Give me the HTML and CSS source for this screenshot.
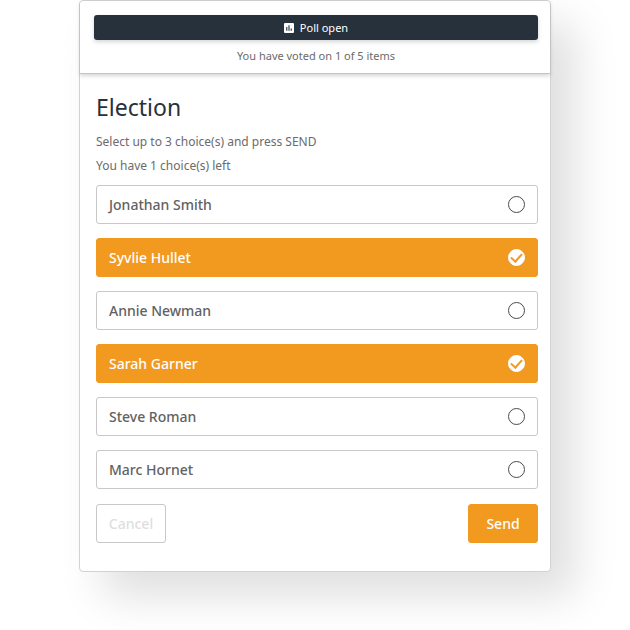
FILE: index.html
```html
<!DOCTYPE html>
<html lang="en">
<head>
  <meta charset="UTF-8">
  <meta name="viewport" content="width=device-width, initial-scale=1.0">
  <title>Election</title>
  <link rel="stylesheet" href="styles.css">
</head>
<body>
  <main class="card">
    <header class="header">
      <div class="status">
        <svg class="status-icon" viewBox="0 0 18 18" aria-hidden="true">
          <path fill="#fff" d="M2 0h14a2 2 0 0 1 2 2v14a2 2 0 0 1-2 2H2a2 2 0 0 1-2-2V2a2 2 0 0 1 2-2z"/>
          <path fill="#27313b" d="M4 7h2v7H4zM8 4h2v10H8zM12 10h2v4h-2z"/>
        </svg>
        <span>Poll open</span>
      </div>
      <p class="progress">You have voted on 1 of 5 items</p>
    </header>

    <form class="poll">
      <h1 class="title">Election</h1>
      <p class="hint">Select up to 3 choice(s) and press SEND</p>
      <p class="hint">You have 1 choice(s) left</p>

      <div class="choices">
        <label class="choice">
          <span>Jonathan Smith</span>
          <input class="check" type="checkbox" name="choice" value="smith">
        </label>
        <label class="choice">
          <span>Syvlie Hullet</span>
          <input class="check" type="checkbox" name="choice" value="hullet" checked>
        </label>
        <label class="choice">
          <span>Annie Newman</span>
          <input class="check" type="checkbox" name="choice" value="newman">
        </label>
        <label class="choice">
          <span>Sarah Garner</span>
          <input class="check" type="checkbox" name="choice" value="garner" checked>
        </label>
        <label class="choice">
          <span>Steve Roman</span>
          <input class="check" type="checkbox" name="choice" value="roman">
        </label>
        <label class="choice">
          <span>Marc Hornet</span>
          <input class="check" type="checkbox" name="choice" value="hornet">
        </label>
      </div>

      <div class="actions">
        <button class="button" type="reset">Cancel</button>
        <button class="button button-send" type="button">Send</button>
      </div>
    </form>
  </main>
</body>
</html>
```
FILE: styles.css
```css
* {
  box-sizing: border-box;
}

body {
  min-height: 100vh;
  margin: 0;
  background: #fff;
  color: #626262;
  font-family: "Noto Sans", "Open Sans", sans-serif;
}

.card {
  max-width: 472px;
  margin: 0 auto;
  background: #fff;
  border: 1px solid #d2d2d2;
  border-radius: 4px;
  box-shadow: 24px 24px 44px #dfdfdf;
}

.header {
  padding: 14px 12px 8px 14px;
  border-bottom: 1px solid #c4c4c4;
  box-shadow: 0 2px 4px rgba(0, 0, 0, 0.16);
}

.status {
  display: flex;
  align-items: center;
  justify-content: center;
  gap: 6px;
  height: 25px;
  background: #27313b;
  border-radius: 3px;
  box-shadow: 0 2px 4px rgba(39, 49, 59, 0.2);
  color: #fff;
  font-size: 11px;
}

.status-icon {
  width: 10px;
  height: 10px;
}

.progress {
  margin: 7px 0 0;
  color: #6b6b6b;
  font-size: 11px;
  line-height: 18px;
  text-align: center;
}

.poll {
  padding: 18px 12px 28px 16px;
}

.title {
  margin: 0 0 8px;
  color: #27313b;
  font-size: 23px;
  font-weight: 400;
  line-height: 30px;
}

.hint {
  margin: 0;
  color: #6b6b6b;
  font-size: 12px;
  line-height: 24px;
}

.choices {
  display: flex;
  flex-direction: column;
  gap: 14px;
  margin: 7px 0 15px;
}

.choice {
  display: flex;
  align-items: center;
  justify-content: space-between;
  height: 39px;
  padding: 0 12px;
  border: 1px solid #c8c8c8;
  border-radius: 3px;
  font-size: 14px;
  font-weight: 500;
  cursor: pointer;
}

.choice:has(:checked) {
  background: #f2991f;
  border-color: #f2991f;
  color: #fff;
}

.check {
  display: flex;
  align-items: center;
  justify-content: center;
  width: 17px;
  height: 17px;
  margin: 0;
  appearance: none;
  border: 1px solid #4a4a4a;
  border-radius: 50%;
}

.check:checked {
  background: #fff;
  border-color: #fff;
}

/* tick */
.check:checked::after {
  content: "";
  width: 5px;
  height: 9px;
  margin-bottom: 3px;
  border: solid #f2991f;
  border-width: 0 2px 2px 0;
  transform: rotate(42deg);
}

.actions {
  display: flex;
  justify-content: space-between;
}

.button {
  width: 70px;
  height: 39px;
  padding: 0;
  background: #fff;
  border: 1px solid #c8c8c8;
  border-radius: 3px;
  color: #dedede;
  font-family: inherit;
  font-size: 14px;
  font-weight: 500;
  cursor: pointer;
}

.button-send {
  background: #f2991f;
  border-color: #f2991f;
  color: #fff;
}
```
